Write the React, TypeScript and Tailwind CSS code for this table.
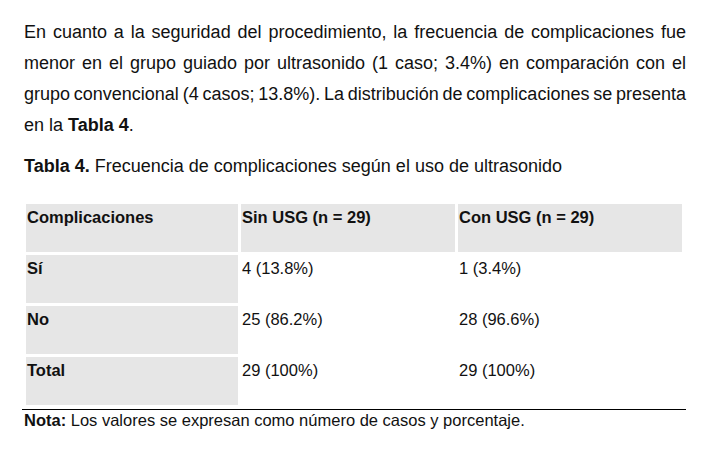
import React from "react";

const rows = [
  { label: "Sí", a: "4 (13.8%)", b: "1 (3.4%)" },
  { label: "No", a: "25 (86.2%)", b: "28 (96.6%)" },
  { label: "Total", a: "29 (100%)", b: "29 (100%)" },
];

export default function App() {
  return (
    <div className="w-[709px] h-[473px] bg-white text-[#111] font-['Liberation_Sans',Arial,sans-serif] overflow-hidden">
      <div className="pt-[17px] ml-[24px] w-[662px] text-[18px] leading-[31px]">
        <div className="text-justify [text-align-last:justify] whitespace-nowrap">
          En cuanto a la seguridad del procedimiento, la frecuencia de complicaciones fue
        </div>
        <div className="text-justify [text-align-last:justify] whitespace-nowrap">
          menor en el grupo guiado por ultrasonido (1 caso; 3.4%) en comparación con el
        </div>
        <div className="text-justify [text-align-last:justify] whitespace-nowrap [word-spacing:-2.4px]">
          grupo convencional (4 casos; 13.8%). La distribución de complicaciones se presenta
        </div>
        <div>
          en la <span className="font-bold">Tabla 4</span>.
        </div>
      </div>
      <div className="ml-[24px] mt-[10px] text-[18px] leading-[31px]">
        <span className="font-bold">Tabla 4.</span> Frecuencia de complicaciones según el uso de ultrasonido
      </div>
      <div className="ml-[26px] mt-[22px] grid grid-cols-[212px_214px_224px] auto-rows-[48px] gap-[3px] text-[16.5px] leading-[24px]">
        <div className="bg-[#e6e6e6] pt-[1px] pl-[1px] font-bold">Complicaciones</div>
        <div className="bg-[#e6e6e6] pt-[1px] pl-[1px] font-bold">Sin USG (n = 29)</div>
        <div className="bg-[#e6e6e6] pt-[1px] pl-[1px] font-bold">Con USG (n = 29)</div>
        {rows.map((r) => (
          <React.Fragment key={r.label}>
            <div className="bg-[#e6e6e6] pt-[1px] pl-[1px] font-bold">{r.label}</div>
            <div className="pt-[1px] pl-[1px]">{r.a}</div>
            <div className="pt-[1px] pl-[1px]">{r.b}</div>
          </React.Fragment>
        ))}
      </div>
      <div className="ml-[22px] mt-[4px] w-[664px] border-t border-black" />
      <div className="ml-[24px] text-[16.5px] leading-[20px]">
        <span className="font-bold">Nota:</span> Los valores se expresan como número de casos y porcentaje.
      </div>
    </div>
  );
}
